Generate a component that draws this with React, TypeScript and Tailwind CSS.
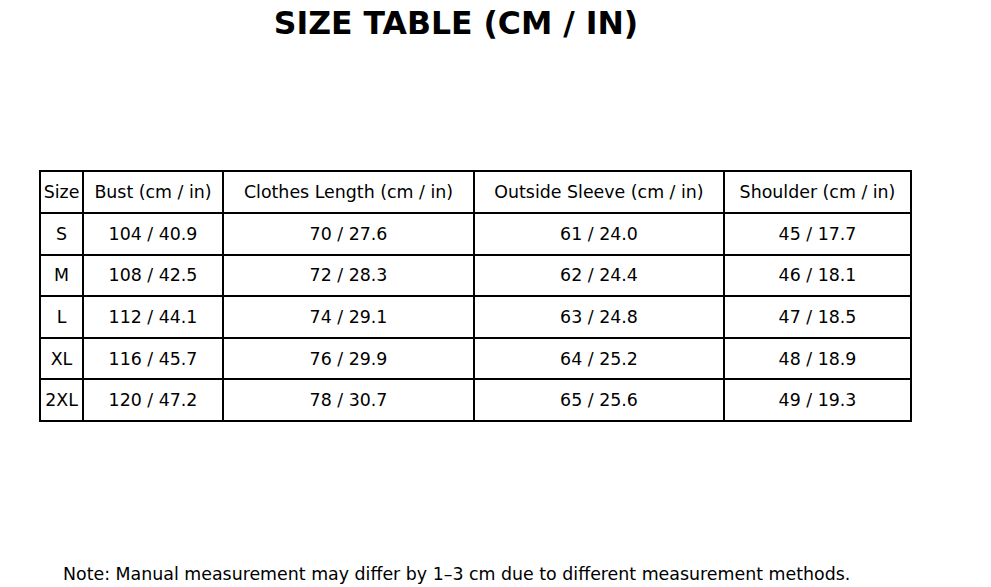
const rows = [
  ["S", "104 / 40.9", "70 / 27.6", "61 / 24.0", "45 / 17.7"],
  ["M", "108 / 42.5", "72 / 28.3", "62 / 24.4", "46 / 18.1"],
  ["L", "112 / 44.1", "74 / 29.1", "63 / 24.8", "47 / 18.5"],
  ["XL", "116 / 45.7", "76 / 29.9", "64 / 25.2", "48 / 18.9"],
  ["2XL", "120 / 47.2", "78 / 30.7", "65 / 25.6", "49 / 19.3"],
];

const headers = [
  "Size",
  "Bust (cm / in)",
  "Clothes Length (cm / in)",
  "Outside Sleeve (cm / in)",
  "Shoulder (cm / in)",
];

const widths = ["w-[43px]", "w-[140px]", "w-[251px]", "w-[250px]", "w-[187px]"];

export default function App() {
  return (
    <div className="h-[587px] w-[991px] overflow-hidden bg-white text-black font-['DejaVu_Sans',sans-serif]">
      <h1 className="w-[912px] pt-[3px] text-center text-[31.5px] font-bold leading-[40px]">
        SIZE TABLE (CM / IN)
      </h1>
      <div className="pl-[39px] pt-[127px]">
        <table className="border-collapse border-2 border-black text-[17.4px]">
          <thead>
            <tr className="h-[42px]">
              {headers.map((h, i) => (
                <th
                  key={h}
                  className={`border-2 border-black p-0 text-center font-normal ${widths[i]}`}
                >
                  {h}
                </th>
              ))}
            </tr>
          </thead>
          <tbody>
            {rows.map((r) => (
              <tr key={r[0]} className="h-[41.6px]">
                {r.map((c, i) => (
                  <td key={i} className={`border-2 border-black p-0 text-center ${widths[i]}`}>
                    {c}
                  </td>
                ))}
              </tr>
            ))}
          </tbody>
        </table>
      </div>
      <p className="pl-[63px] pt-[140px] text-[17.4px] leading-[24px]">
        Note: Manual measurement may differ by 1–3 cm due to different measurement methods.
      </p>
    </div>
  );
}
